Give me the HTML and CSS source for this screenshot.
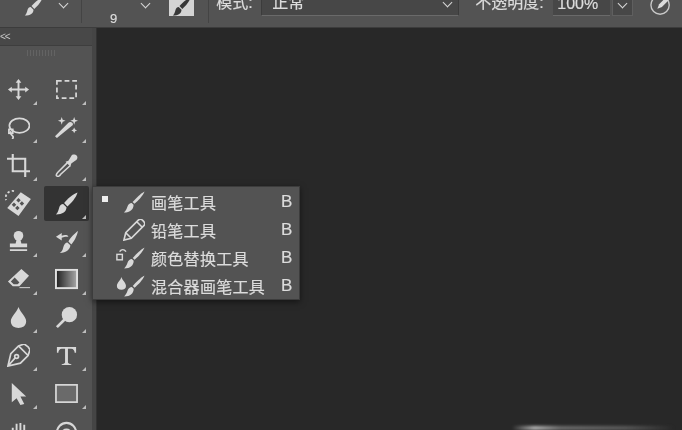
FILE: index.html
```html
<!DOCTYPE html>
<html lang="zh-CN">
<head>
    <meta charset="UTF-8">
    <title>画笔工具</title>
    <link rel="stylesheet" href="styles.css">
</head>
<body>
    <svg class="defs" width="0" height="0">
        <symbol id="brush" viewBox="0 0 24 24">
            <path d="M23.500 .5 C19 2 12 8 9.500 11.500 L13 15 C17 11.500 22 6 23.500 .5Z"/>
            <path d="M8.500 12.500 L12 16 C12 20.500 8 23.500 1 23.500 C3.500 21 3.500 19 4.500 16 C5 14 6.500 12.500 8.500 12.500Z"/>
        </symbol>
        <symbol id="brush-thin" viewBox="0 0 24 24">
            <path d="M23.500 .5 C19 3 14 8 10.500 12 L12.500 14 C16.500 10.500 21.500 5.500 23.500 .5Z"/>
            <path d="M9.500 13 L11.500 15 C11.500 20 8 23.500 1 23.500 C3.500 21 4 19 5 16.500 C5.500 14.500 7.500 13 9.500 13Z"/>
        </symbol>
    </svg>

    <div class="app">
        <div class="options-bar">
            <svg class="opt-brush"><use href="#brush"/></svg>
            <span class="chev chev-first"></span>
            <span class="sep sep-first"></span>
            <span class="size">9</span>
            <span class="chev chev-size"></span>
            <span class="brush-panel"><svg><use href="#brush"/></svg></span>
            <span class="sep sep-mode"></span>
            <span class="opt-label label-mode">模式:</span>
            <span class="select"><span>正常</span><span class="chev"></span></span>
            <span class="opt-label label-opacity">不透明度:</span>
            <span class="input">100%</span>
            <span class="input-btn"><span class="chev"></span></span>
            <svg class="pressure" viewBox="0 0 24 24">
                <circle cx="11" cy="11" r="10"/>
                <path class="pressure-pen" d="M20 0 L23 3 L13 13 L8 15 L10 10Z"/>
            </svg>
        </div>

        <div class="main">
            <div class="toolbar">
                <div class="toolbar-head">&lt;&lt;</div>
                <div class="toolbar-grip"><i></i></div>
                <div class="tools">
                    <div class="tool">
                        <svg viewBox="0 0 24 24"><path d="M12 1 L15 5 H13 V11 H19 V9 L23 12 L19 15 V13 H13 V19 H15 L12 23 L9 19 H11 V13 H5 V15 L1 12 L5 9 V11 H11 V5 H9Z"/></svg>
                    </div>
                    <div class="tool">
                        <svg viewBox="0 0 24 24" class="line dashed"><rect x="2" y="3" width="20" height="18"/></svg>
                    </div>
                    <div class="tool">
                        <svg viewBox="0 0 24 24" class="line"><ellipse cx="13" cy="10" rx="10.500" ry="7.500"/><path d="M4 16 C3 19 5 20 6 21 C7 22 6 24 5 24"/><rect x="2" y="14" width="4" height="4"/></svg>
                    </div>
                    <div class="tool">
                        <svg viewBox="0 0 24 24"><path d="M2 23 L0 21 L14 7 C15 6 17 6 18 7 C19 8 19 9 18 10Z"/><path d="M7 1 L8 4 L11 5 L8 6 L7 9 L6 6 L3 5 L6 4Z M20 1 L21 4 L24 5 L21 6 L20 9 L19 6 L16 5 L19 4Z M20 12 L21 14 L23 15 L21 16 L20 18 L19 16 L17 15 L19 14Z"/></svg>
                    </div>
                    <div class="tool">
                        <svg viewBox="0 0 24 24" class="line thick"><path d="M0 5 H6 M6 0 V18 H24 M6 5 H19 V24"/></svg>
                    </div>
                    <div class="tool">
                        <svg viewBox="0 0 24 24"><path class="line-shape" d="M13 9 L3 19 C1 21 1 23 2 23 C3 24 5 23 6 21 L16 12"/><path d="M11 8 L14 7 L17 2 C18 0 21 0 23 2 C24 4 23 6 21 7 L17 10 L16 13Z"/></svg>
                    </div>
                    <div class="tool tool-wide">
                        <svg viewBox="0 0 24 24"><path d="M14 2 L23 8 L12 23 L2 16Z M12 7 L10 9 L12 11 L14 9Z M8 11 L6 13 L8 15 L10 13Z M15 10 L13 12 L15 14 L17 12Z M11 14 L9 16 L11 18 L13 16Z" fill-rule="evenodd"/><path class="line-shape" d="M8 1 A6 6 0 0 0 1 9" stroke-dasharray="2 2"/></svg>
                    </div>
                    <div class="tool tool-active">
                        <svg viewBox="0 0 24 24"><use href="#brush"/></svg>
                    </div>
                    <div class="tool">
                        <svg viewBox="0 0 24 24"><circle cx="12" cy="6" r="5"/><path d="M10 10 H14 L15 14 H21 V18 H3 V14 H9Z M3 20 H21 V22 H3Z"/></svg>
                    </div>
                    <div class="tool">
                        <svg viewBox="0 0 24 24"><path d="M24 1 C21 3 16 8 14 12 L17 15 C20 12 23 6 24 1Z M13 13 L16 16 C16 20 12 24 5 24 C8 22 8 20 9 17 C9.500 15 11 13 13 13Z M1 7 L7 3 V6 C10 5 13 5 14 7 C12 7 9 7 7 8 V11Z"/></svg>
                    </div>
                    <div class="tool">
                        <svg viewBox="0 0 24 24"><path fill-rule="evenodd" d="M15 1 L23 8 L13 19 H6 L1 14Z M8 10 L4 14 L7 17 H11 L13 15Z"/><path d="M13 20 H24 V21 H13Z"/></svg>
                    </div>
                    <div class="tool">
                        <svg viewBox="0 0 24 24" class="gradient-icon"><rect class="gradient-frame" x="1" y="2" width="22" height="19"/></svg>
                    </div>
                    <div class="tool">
                        <svg viewBox="0 0 24 24"><path d="M12 1 C14 7 20 11 20 16 C20 21 16 23 12 23 C8 23 4 21 4 16 C4 11 10 7 12 1Z"/></svg>
                    </div>
                    <div class="tool">
                        <svg viewBox="0 0 24 24"><circle cx="15" cy="9" r="8"/><path d="M9 13 L11 15 L3 23 L1 21Z"/></svg>
                    </div>
                    <div class="tool">
                        <svg viewBox="0 0 24 24" class="line"><path d="M22 3 L18 0 L12 2 L4 10 L1 23 L14 20 L22 12 L24 6Z M12 2 L22 12 M1 23 L9 14"/><circle cx="10" cy="13" r="2"/></svg>
                    </div>
                    <div class="tool">
                        <svg viewBox="0 0 24 24"><path d="M2 3 H22 V9 H20.500 C20.500 7 19 5 17 5 H13.500 V19 C13.500 20 15 21 17 21 V22 H7 V21 C9 21 10.500 20 10.500 19 V5 H7 C5 5 3.500 7 3.500 9 H2Z"/></svg>
                    </div>
                    <div class="tool">
                        <svg viewBox="0 0 24 24"><path d="M5 1 L20 15 H14 L18 23 L14 24 L10 17 L5 21Z"/></svg>
                    </div>
                    <div class="tool">
                        <svg viewBox="0 0 24 24" class="line shape-fill"><rect x="1" y="3" width="22" height="18"/></svg>
                    </div>
                    <div class="tool">
                        <svg viewBox="0 0 24 24"><path d="M5 8 H7 V18 H5Z M9 4 H11 V16 H9Z M13 3 H15 V16 H13Z M17 5 H19 V17 H17Z M5 16 H19 V24 H5Z"/></svg>
                    </div>
                    <div class="tool">
                        <svg viewBox="0 0 24 24" class="line thick"><circle cx="12" cy="13" r="10"/><circle cx="12" cy="15" r="5"/></svg>
                    </div>
                </div>
            </div>
            <div class="toolbar-edge"></div>

            <div class="canvas">
                <div class="speck"></div>
            </div>
        </div>

        <div class="menu">
            <div class="menu-row">
                <span class="mark"><i class="dot"></i></span>
                <span class="menu-icon"><svg viewBox="0 0 24 24"><use href="#brush-thin"/></svg></span>
                <span class="menu-name">画笔工具</span>
                <span class="menu-key">B</span>
            </div>
            <div class="menu-row">
                <span class="mark"></span>
                <span class="menu-icon"><svg viewBox="0 0 24 24" class="line"><path d="M1 23 L3 15 L17 1 C18 0 20 0 22 2 C24 4 24 6 23 7 L9 21Z M3 15 L9 21 M15 3 L21 9"/></svg></span>
                <span class="menu-name">铅笔工具</span>
                <span class="menu-key">B</span>
            </div>
            <div class="menu-row">
                <span class="mark"></span>
                <span class="menu-icon menu-icon-wide">
                    <svg viewBox="0 0 32 24"><use href="#brush-thin" x="8" width="24" height="24"/><rect class="line-shape" x="1" y="8" width="6" height="6"/><path class="line-shape" d="M4 5 C6 2 9 2 11 5"/></svg>
                </span>
                <span class="menu-name">颜色替换工具</span>
                <span class="menu-key">B</span>
            </div>
            <div class="menu-row">
                <span class="mark"></span>
                <span class="menu-icon menu-icon-wide">
                    <svg viewBox="0 0 32 24"><use href="#brush-thin" x="8" width="24" height="24"/><path d="M6 2 C7 6 11 8 11 12 C11 15 9 16 6 16 C3 16 1 15 1 12 C1 8 5 6 6 2Z"/></svg>
                </span>
                <span class="menu-name">混合器画笔工具</span>
                <span class="menu-key">B</span>
            </div>
        </div>
    </div>
</body>
</html>
```

FILE: styles.css
```css
* {
    box-sizing: border-box;
}

body {
    margin: 0;
    font-family: "Liberation Sans", "Noto Sans CJK SC", sans-serif;
    background: #282828;
    overflow: hidden;
}

.defs {
    position: absolute;
}

svg {
    fill: #d8d8d8;
    display: block;
}

/* the reference is a soft, upscaled shot */
.app {
    position: relative;
    width: 682px;
    height: 430px;
    display: flex;
    flex-direction: column;
    overflow: hidden;
    filter: blur(.45px);
}

/* top options bar, its upper part is cut off by the screenshot */
.options-bar {
    height: 28px;
    flex: none;
    display: flex;
    align-items: flex-start;
    background: #535353;
    border-bottom: 1px solid #3c3c3c;
    color: #dcdcdc;
    font-size: 16px;
    -webkit-text-stroke: .2px #dcdcdc;
}

.opt-brush {
    width: 19px;
    height: 19px;
    margin: -3px 0 0 24px;
}

.chev {
    width: 7px;
    height: 7px;
    border-right: 1.500px solid #d8d8d8;
    border-bottom: 1.500px solid #d8d8d8;
    transform: rotate(45deg);
    flex: none;
}

.chev-first {
    margin: 0 0 0 17px;
}

.sep {
    width: 1px;
    height: 23px;
    background: #444;
    flex: none;
}

.sep-first {
    margin-left: 14px;
}

.size {
    margin: 11px 0 0 28px;
    font-size: 13px;
    line-height: 16px;
}

.chev-size {
    margin: 0 0 0 25px;
}

.brush-panel {
    width: 25px;
    height: 16px;
    margin-left: 20px;
    background: #d4d4d4;
    flex: none;
}

.brush-panel svg {
    width: 19px;
    height: 19px;
    margin: -3px 0 0 3px;
    fill: #383838;
}

.sep-mode {
    margin-left: 14px;
}

.opt-label {
    line-height: 14px;
    margin-top: -4px;
    white-space: nowrap;
}

.label-mode {
    margin-left: 7px;
    width: 45px;
}

.select {
    width: 198px;
    height: 17px;
    background: #474747;
    border: 1px solid #3c3c3c;
    border-top: 0;
    border-bottom-color: #6a6a6a;
    display: flex;
    justify-content: space-between;
    align-items: flex-start;
    padding: 0 7px 0 10px;
    line-height: 14px;
    margin-top: -1px;
}

.select span:first-child {
    margin-top: -3px;
}

.label-opacity {
    margin-left: 16px;
    width: 78px;
}

.input {
    width: 57px;
    height: 16px;
    background: #474747;
    border-bottom: 1px solid #6a6a6a;
    line-height: 8px;
    padding-left: 4px;
}

.input-btn {
    width: 21px;
    height: 16px;
    margin-left: 2px;
    background: #474747;
    border: 1px solid #5f5f5f;
    border-top: 0;
    display: flex;
    justify-content: center;
}

.pressure {
    width: 22px;
    height: 22px;
    margin: -5px 0 0 17px;
    fill: none;
    stroke: #c8c8c8;
    stroke-width: 1.500;
    flex: none;
}

.pressure-pen {
    fill: #dcdcdc;
    stroke: none;
}

.main {
    flex: 1;
    display: flex;
    min-height: 0;
}

/* tools panel */
.toolbar {
    width: 92px;
    flex: none;
    background: #535353;
    overflow: hidden;
}

.toolbar-head {
    height: 18px;
    background: #484848;
    border-bottom: 1px solid #3e3e3e;
    color: #c8c8c8;
    font-size: 10px;
    line-height: 17px;
    letter-spacing: -1px;
}

.toolbar-grip {
    height: 24px;
    padding: 4px 0 0 27px;
}

.toolbar-grip i {
    display: block;
    width: 28px;
    height: 6px;
    background: repeating-linear-gradient(90deg, #636363 0 1px, transparent 1px 3px);
}

.tools {
    display: grid;
    grid-template-columns: 36px 45px;
    grid-auto-rows: 38px;
    column-gap: 8px;
}

.tool {
    position: relative;
    display: flex;
    align-items: center;
    justify-content: center;
    height: 38px;
}

.tool svg {
    width: 23px;
    height: 23px;
    flex: none;
}

.tool-wide svg {
    width: 27px;
    height: 27px;
}

/* the small flyout corner each tool has */
.tool::after {
    content: "";
    position: absolute;
    right: -1px;
    bottom: 3px;
    border-left: 4px solid transparent;
    border-bottom: 4px solid #bdbdbd;
}

.tool:nth-child(even)::after {
    right: 3px;
}

.tool-active {
    background: #333;
    border-radius: 2px;
    height: 35px;
    margin-top: 2px;
}

.tool-active::after {
    bottom: 2px;
}

svg.line {
    fill: none;
    stroke: #d8d8d8;
    stroke-width: 1.800;
}

svg.thick {
    stroke-width: 2.200;
}

svg.dashed rect {
    stroke-dasharray: 5 3;
}

svg.shape-fill {
    fill: #6a6a6a;
}

.line-shape {
    fill: none;
    stroke: #d8d8d8;
    stroke-width: 1.600;
}

.gradient-frame {
    fill: none;
    stroke: #e0e0e0;
    stroke-width: 2;
}

.gradient-icon {
    background: linear-gradient(90deg, #262626, #a8a8a8) center / 20px 17px no-repeat;
}

.toolbar-edge {
    width: 5px;
    flex: none;
    background: #454545;
    border-right: 1px solid #333;
}

.canvas {
    flex: 1;
    position: relative;
    background: #282828;
}

/* bit of artwork peeking in at the bottom edge */
.speck {
    position: absolute;
    left: 415px;
    right: 8px;
    bottom: 0;
    height: 4px;
    background: linear-gradient(90deg, transparent, #b8b8b8 14%, #6e6e6e 30%, #5a5a5a 70%, transparent);
    filter: blur(1.500px);
}

/* brush tool flyout */
.menu {
    position: absolute;
    left: 92px;
    top: 186px;
    width: 208px;
    height: 114px;
    padding: 1px 0;
    background: #535353;
    border: 1px solid #3c3c3c;
    box-shadow: 0 2px 6px rgba(0, 0, 0, .5);
    color: #dcdcdc;
    font-size: 16px;
    -webkit-text-stroke: .2px #dcdcdc;
}

.menu-row {
    height: 28px;
    display: flex;
    align-items: center;
}

.mark {
    width: 24px;
    flex: none;
    padding-left: 9px;
}

.dot {
    display: block;
    width: 6px;
    height: 6px;
    margin-top: -6px;
    background: #eee;
}

.menu-icon {
    width: 34px;
    flex: none;
    display: flex;
    justify-content: flex-end;
    padding-right: 6px;
}

.menu-icon svg {
    width: 22px;
    height: 22px;
}

.menu-icon-wide svg {
    width: 29px;
    height: 22px;
    flex: none;
}

.menu-name {
    flex: 1;
    white-space: nowrap;
    letter-spacing: .3px;
}

.menu-key {
    width: 18px;
    flex: none;
    font-size: 17px;
}
```
